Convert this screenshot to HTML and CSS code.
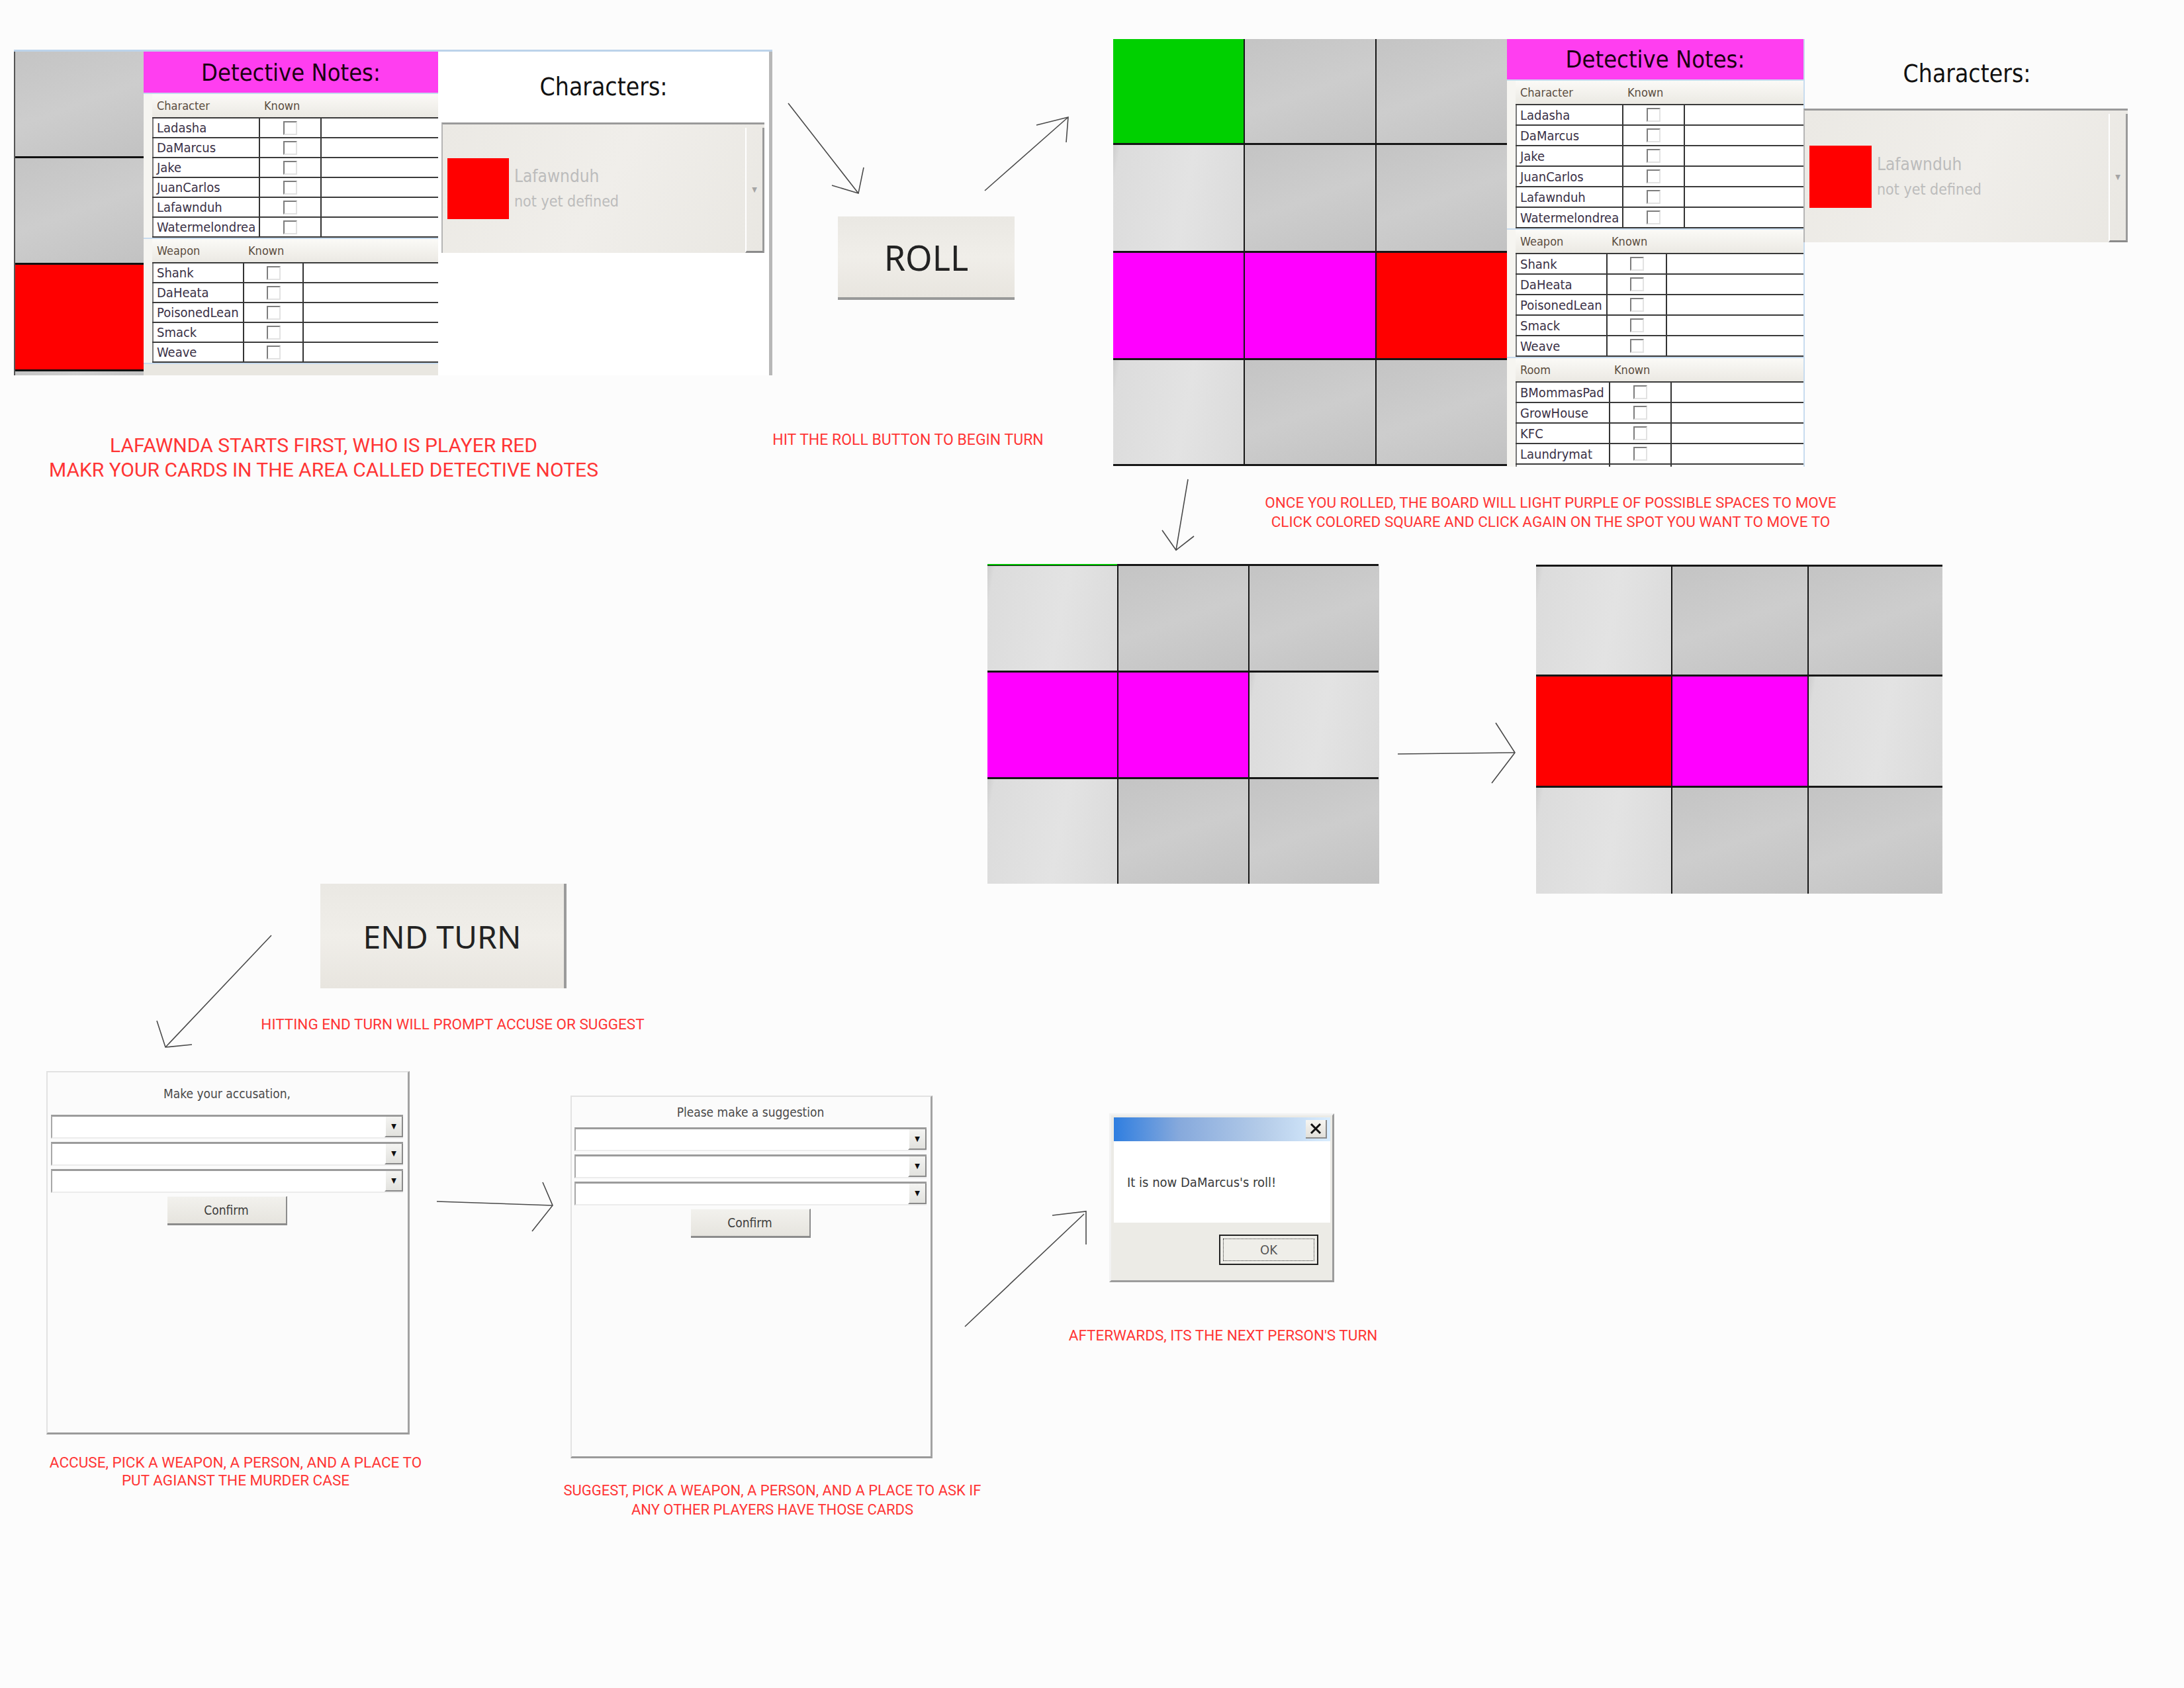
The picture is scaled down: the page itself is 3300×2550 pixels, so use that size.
FILE: index.html
```html
<!DOCTYPE html>
<html lang="en">
<head>
  <meta charset="UTF-8">
  <title>How to play - Clue walkthrough</title>
  <link rel="stylesheet" href="styles.css">
</head>
<body>
<div class="canvas">

  <!-- step 1: first screen, red player starts -->
  <div class="screen first">
    <div class="strip">
      <div class="cell c-gray"></div>
      <div class="cell c-gray"></div>
      <div class="cell c-red"></div>
      <div class="cell c-gray"></div>
    </div>
    <div class="notes">
      <div class="notes-head">Detective Notes:</div>
      <div class="sect person">
        <div class="sect-head"><span>Character</span><span>Known</span></div>
        <div class="rows">
          <div class="row"><span class="name">Ladasha</span><span class="chk"><i class="box"></i></span><span></span></div>
          <div class="row"><span class="name">DaMarcus</span><span class="chk"><i class="box"></i></span><span></span></div>
          <div class="row"><span class="name">Jake</span><span class="chk"><i class="box"></i></span><span></span></div>
          <div class="row"><span class="name">JuanCarlos</span><span class="chk"><i class="box"></i></span><span></span></div>
          <div class="row"><span class="name">Lafawnduh</span><span class="chk"><i class="box"></i></span><span></span></div>
          <div class="row"><span class="name">Watermelondrea</span><span class="chk"><i class="box"></i></span><span></span></div>
        </div>
      </div>
      <div class="sect weapon">
        <div class="sect-head"><span>Weapon</span><span>Known</span></div>
        <div class="rows">
          <div class="row"><span class="name">Shank</span><span class="chk"><i class="box"></i></span><span></span></div>
          <div class="row"><span class="name">DaHeata</span><span class="chk"><i class="box"></i></span><span></span></div>
          <div class="row"><span class="name">PoisonedLean</span><span class="chk"><i class="box"></i></span><span></span></div>
          <div class="row"><span class="name">Smack</span><span class="chk"><i class="box"></i></span><span></span></div>
          <div class="row"><span class="name">Weave</span><span class="chk"><i class="box"></i></span><span></span></div>
        </div>
      </div>
      <div class="sect filler"></div>
    </div>
    <div class="chars bordered">
      <div class="chars-title">Characters:</div>
      <div class="combo">
        <div class="swatch"></div>
        <div class="combo-text">
          <div>Lafawnduh</div>
          <div class="sub">not yet defined</div>
        </div>
        <div class="combo-drop">&#9660;</div>
      </div>
    </div>
  </div>

  <div class="caption cap-start">LAFAWNDA STARTS FIRST, WHO IS PLAYER RED<br>MAKR YOUR CARDS IN THE AREA CALLED DETECTIVE NOTES</div>

  <!-- step 2: roll -->
  <div class="bigbtn roll">ROLL</div>
  <div class="caption cap-roll">HIT THE ROLL BUTTON TO BEGIN TURN</div>

  <!-- step 3: board lit up after the roll -->
  <div class="screen second">
    <div class="board board-main">
      <div class="cell c-green"></div><div class="cell c-gray"></div><div class="cell c-gray"></div>
      <div class="cell c-light"></div><div class="cell c-gray"></div><div class="cell c-gray"></div>
      <div class="cell c-mag"></div><div class="cell c-mag"></div><div class="cell c-red"></div>
      <div class="cell c-light"></div><div class="cell c-gray"></div><div class="cell c-gray"></div>
    </div>
    <div class="notes tall">
      <div class="notes-head">Detective Notes:</div>
      <div class="sect person">
        <div class="sect-head"><span>Character</span><span>Known</span></div>
        <div class="rows">
          <div class="row"><span class="name">Ladasha</span><span class="chk"><i class="box"></i></span><span></span></div>
          <div class="row"><span class="name">DaMarcus</span><span class="chk"><i class="box"></i></span><span></span></div>
          <div class="row"><span class="name">Jake</span><span class="chk"><i class="box"></i></span><span></span></div>
          <div class="row"><span class="name">JuanCarlos</span><span class="chk"><i class="box"></i></span><span></span></div>
          <div class="row"><span class="name">Lafawnduh</span><span class="chk"><i class="box"></i></span><span></span></div>
          <div class="row"><span class="name">Watermelondrea</span><span class="chk"><i class="box"></i></span><span></span></div>
        </div>
      </div>
      <div class="sect weapon">
        <div class="sect-head"><span>Weapon</span><span>Known</span></div>
        <div class="rows">
          <div class="row"><span class="name">Shank</span><span class="chk"><i class="box"></i></span><span></span></div>
          <div class="row"><span class="name">DaHeata</span><span class="chk"><i class="box"></i></span><span></span></div>
          <div class="row"><span class="name">PoisonedLean</span><span class="chk"><i class="box"></i></span><span></span></div>
          <div class="row"><span class="name">Smack</span><span class="chk"><i class="box"></i></span><span></span></div>
          <div class="row"><span class="name">Weave</span><span class="chk"><i class="box"></i></span><span></span></div>
        </div>
      </div>
      <div class="sect room">
        <div class="sect-head"><span>Room</span><span>Known</span></div>
        <div class="rows">
          <div class="row"><span class="name">BMommasPad</span><span class="chk"><i class="box"></i></span><span></span></div>
          <div class="row"><span class="name">GrowHouse</span><span class="chk"><i class="box"></i></span><span></span></div>
          <div class="row"><span class="name">KFC</span><span class="chk"><i class="box"></i></span><span></span></div>
          <div class="row"><span class="name">Laundrymat</span><span class="chk"><i class="box"></i></span><span></span></div>
          <div class="row"><span class="name"></span><span class="chk"><i class="box"></i></span><span></span></div>
        </div>
      </div>
    </div>
    <div class="chars">
      <div class="chars-title">Characters:</div>
      <div class="combo">
        <div class="swatch"></div>
        <div class="combo-text">
          <div>Lafawnduh</div>
          <div class="sub">not yet defined</div>
        </div>
        <div class="combo-drop">&#9660;</div>
      </div>
    </div>
  </div>

  <div class="caption cap-once">ONCE YOU ROLLED, THE BOARD WILL LIGHT PURPLE OF POSSIBLE SPACES TO MOVE<br>CLICK COLORED SQUARE AND CLICK AGAIN ON THE SPOT YOU WANT TO MOVE TO</div>

  <!-- step 4: pick a square, then move -->
  <div class="board board-pick">
    <div class="cell c-light"></div><div class="cell c-gray"></div><div class="cell c-gray"></div>
    <div class="cell c-mag"></div><div class="cell c-mag"></div><div class="cell c-light"></div>
    <div class="cell c-light"></div><div class="cell c-gray"></div><div class="cell c-gray"></div>
  </div>

  <div class="board board-moved">
    <div class="cell c-light"></div><div class="cell c-gray"></div><div class="cell c-gray"></div>
    <div class="cell c-red"></div><div class="cell c-mag"></div><div class="cell c-light"></div>
    <div class="cell c-light"></div><div class="cell c-gray"></div><div class="cell c-gray"></div>
  </div>

  <!-- step 5: end turn -->
  <div class="bigbtn endturn">END TURN</div>
  <div class="caption cap-end">HITTING END TURN WILL PROMPT ACCUSE OR SUGGEST</div>

  <div class="dialog accuse">
    <div class="dialog-title">Make your accusation,</div>
    <div class="select"><span class="select-btn">&#9660;</span></div>
    <div class="select"><span class="select-btn">&#9660;</span></div>
    <div class="select"><span class="select-btn">&#9660;</span></div>
    <div class="confirm">Confirm</div>
  </div>
  <div class="caption cap-accuse">ACCUSE, PICK A WEAPON, A PERSON, AND A PLACE TO<br>PUT AGIANST THE MURDER CASE</div>

  <div class="dialog suggest">
    <div class="dialog-title">Please make a suggestion</div>
    <div class="select"><span class="select-btn">&#9660;</span></div>
    <div class="select"><span class="select-btn">&#9660;</span></div>
    <div class="select"><span class="select-btn">&#9660;</span></div>
    <div class="confirm">Confirm</div>
  </div>
  <div class="caption cap-suggest">SUGGEST, PICK A WEAPON, A PERSON, AND A PLACE TO ASK IF<br>ANY OTHER PLAYERS HAVE THOSE CARDS</div>

  <!-- step 6: next player -->
  <div class="msgbox">
    <div class="msg-title">
      <span class="msg-close">
        <svg width="18" height="16" viewBox="0 0 18 16"><path d="M2 1 L16 15 M16 1 L2 15" stroke="#111" stroke-width="3"/></svg>
      </span>
    </div>
    <div class="msg-body">It is now DaMarcus's roll!</div>
    <div class="msg-foot"><span class="ok">OK</span></div>
  </div>
  <div class="caption cap-after">AFTERWARDS, ITS THE NEXT PERSON'S TURN</div>

  <!-- hand drawn arrows -->
  <svg class="arrows" width="3300" height="2550" viewBox="0 0 3300 2550">
    <g stroke="#4a4a4a" stroke-width="1.6" fill="none">
      <path d="M1191 156 L1297 292 M1257 280 L1297 292 L1305 253"/>
      <path d="M1488 288 L1614 177 M1566 189 L1614 177 L1611 215"/>
      <path d="M1795 724 L1777 831 M1756 801 L1777 831 L1804 810"/>
      <path d="M2112 1139 L2289 1137 M2260 1092 L2289 1137 L2254 1183"/>
      <path d="M410 1413 L250 1582 M237 1542 L250 1582 L290 1578"/>
      <path d="M660 1815 L835 1821 M820 1786 L835 1821 L804 1860"/>
      <path d="M1458 2004 L1638 1834 M1590 1836 L1641 1830 L1641 1880"/>
    </g>
  </svg>
</div>
</body>
</html>
```

FILE: styles.css
```css
body {
  margin: 0;
  background: #fcfcfc;
  font-family: "DejaVu Sans Condensed", "DejaVu Sans", sans-serif;
  color: #333;
}
.canvas { position: relative; width: 3300px; height: 2550px; overflow: hidden; }

/* pieces placed on the walkthrough canvas */
.screen, .board-pick, .board-moved, .bigbtn, .dialog, .msgbox, .caption, .arrows { position: absolute; }
.arrows { left: 0; top: 0; pointer-events: none; }

/* board cells */
.cell { flex: none; }
.c-light { background: linear-gradient(100deg, #cdcdcd 0, #dcdcdc 5%, #e3e3e3 55%, #dadada 100%); }
.c-gray { background: linear-gradient(160deg, #c4c4c4, #cdcdcd 50%, #c2c2c2); }
.c-green { background: #00d000; }
.c-mag { background: #ff00ff; }
.c-red { background: #ff0000; }

.board { display: grid; background: #161616; column-gap: 2px; row-gap: 3px; border-bottom: 3px solid #161616; }

/* screen 1 */
.screen { display: flex; background: #fff; overflow: hidden; }
.screen.first { left: 21px; top: 75px; width: 1146px; height: 489px; border-top: 3px solid #bcd3ea; }
.strip { width: 194px; border-left: 2px solid #555; display: flex; flex-direction: column; gap: 3px; background: #111; }
.strip .cell { height: 158px; }
.strip .cell:last-child { flex: 1; }

/* detective notes */
.notes { width: 445px; flex: none; background: #ebe9e3; display: flex; flex-direction: column; overflow: hidden; }
.notes-head { height: 62px; flex: none; background: #ff3ef0; color: #1c0012; font-size: 36px; display: flex; align-items: center; justify-content: center; }
.sect { --c1: 161px; --c2: 95px; flex: none; padding-left: 13px; border-top: 2px solid #c6daee; background: #f6f5f1; }
.sect:first-of-type { border-top: none; }
.sect.weapon { --c1: 137px; --c2: 92px; }
.sect.room { --c1: 141px; --c2: 95px; }
.sect.filler { flex: 1; background: #e9e7e1; }
.sect-head { height: 35px; display: grid; grid-template-columns: var(--c1) var(--c2) 1fr; align-items: center; font-size: 18px; color: #5b4d40; background: linear-gradient(#fbfaf7, #ebe9e3); }
.sect-head span:first-child { padding-left: 7px; }
.sect-head span:nth-child(2) { padding-left: 8px; }
.rows { border-bottom: 2px solid #3a3a3a; }
.row { height: 30px; box-sizing: border-box; display: grid; grid-template-columns: var(--c1) var(--c2) 1fr; background: #fff; border-top: 2px solid #3a3a3a; font-size: 20px; }
.notes.tall .notes-head { height: 61px; }
.notes.tall .row { height: 31px; }
.name { padding-left: 5px; border-left: 2px solid #7a7a7a; display: flex; align-items: center; white-space: nowrap; overflow: hidden; color: #3a3146; }
.chk { border-left: 2px solid #333; border-right: 2px solid #333; display: flex; align-items: center; justify-content: center; }
.box { width: 17px; height: 17px; border: 2px solid; border-color: #7d7d7d #e2e2e2 #e2e2e2 #7d7d7d; background: #fff; }

/* characters combo */
.chars { flex: 1; display: flex; flex-direction: column; background: #fff; }
.chars.bordered { border-right: 5px solid #b8b8b8; }
.chars-title { height: 107px; flex: none; display: flex; align-items: center; justify-content: center; font-size: 37px; color: #111; }
.combo { height: 197px; box-sizing: border-box; margin: 0 7px 0 5px; border-top: 3px solid #9a9a9a; border-left: 2px solid #b5b5b5; background: linear-gradient(120deg, #ebe9e4, #f0eeea 50%, #e9e7e2); display: flex; align-items: center; }
.swatch { width: 93px; height: 92px; background: #ff0000; margin-left: 7px; flex: none; }
.combo-text { margin-left: 8px; color: #bcbcbc; font-size: 26px; line-height: 38px; }
.combo-text .sub { font-size: 23px; }
.combo-drop { margin-left: auto; align-self: stretch; margin-top: 5px; width: 24px; border-left: 2px solid #fff; border-right: 3px solid #9a9a9a; border-bottom: 3px solid #8a8a8a; display: flex; align-items: center; justify-content: center; color: #a5a5a5; font-size: 11px; }

/* screen 2 */
.screen.second { left: 1682px; top: 59px; width: 1535px; height: 646px; background: transparent; }
.board-main { width: 595px; flex: none; grid-template-columns: repeat(3, 197px); grid-template-rows: 157px 160px 159px 157px; align-self: flex-start; }
.screen.second .notes { width: 448px; border-right: 2px solid #c8dcef; }
.screen.second .chars { background: transparent; }
.screen.second .chars-title { height: 105px; }
.screen.second .combo { margin: 0 2px 0 -2px; height: 202px; }
.screen.second .swatch { height: 94px; width: 94px; }

/* middle boards */
.board-pick { left: 1492px; top: 852px; width: 591px; grid-template-columns: repeat(3, 196px); grid-template-rows: repeat(3, 158px); border-top: 3px solid #161616; border-bottom: none; }
.board-pick::before { content: ""; position: absolute; left: 0; top: -3px; width: 196px; height: 2px; background: #00c000; }
.board-moved { left: 2321px; top: 853px; width: 614px; grid-template-columns: 204px 204px 202px; grid-template-rows: 163px 165px 160px; border-top: 3px solid #161616; border-bottom: none; }

/* big buttons */
.bigbtn { display: flex; align-items: center; justify-content: center; box-sizing: border-box; font-family: "Noto Sans", sans-serif; color: #222; background: linear-gradient(#eae8e3, #f0eee9 50%, #e8e5df); }
.roll { left: 1266px; top: 327px; width: 267px; height: 126px; font-size: 52px; border-bottom: 4px solid #999; }
.endturn { left: 484px; top: 1335px; width: 372px; height: 158px; font-size: 48px; border-right: 4px solid #9b9b9b; }

/* accuse / suggest dialogs */
.dialog { display: flex; flex-direction: column; box-sizing: border-box; background: #fbfbfb; border: 2px solid #e2e2e2; border-right: 3px solid #a3a3a3; border-bottom: 3px solid #9a9a9a; }
.accuse { left: 70px; top: 1618px; width: 549px; height: 549px; padding: 0 7px 0 5px; }
.suggest { left: 862px; top: 1655px; width: 547px; height: 548px; padding: 0 6px 0 4px; }
.dialog-title { height: 64px; flex: none; display: flex; align-items: center; justify-content: center; font-size: 19px; color: #4a4a4a; }
.suggest .dialog-title { height: 46px; }
.select { height: 36px; flex: none; box-sizing: border-box; margin-bottom: 5px; background: #fff; border-top: 3px solid #9b9b9b; border-left: 2px solid #a8a8a8; border-bottom: 2px solid #ececec; display: flex; justify-content: flex-end; }
.select-btn { width: 24px; background: linear-gradient(#f4f4f2, #e2e2de); border-left: 2px solid #fff; border-right: 2px solid #8a8a8a; border-bottom: 2px solid #8a8a8a; display: flex; align-items: center; justify-content: center; font-size: 11px; color: #111; }
.confirm { align-self: center; width: 181px; height: 44px; box-sizing: border-box; display: flex; align-items: center; justify-content: center; background: linear-gradient(#f2f1ed, #e6e4de); border-top: 1px solid #f8f8f8; border-right: 2px solid #8c8c8c; border-bottom: 3px solid #8c8c8c; font-size: 19px; color: #3c3c3c; }

/* message box */
.msgbox { left: 1676px; top: 1682px; width: 340px; height: 255px; box-sizing: border-box; padding: 3px 3px 0 4px; background: #ecebe6; border: 3px solid; border-color: #f2f2f2 #9c9c9c #9c9c9c #f2f2f2; }
.msg-title { height: 36px; display: flex; align-items: center; justify-content: flex-end; padding-right: 5px; background: linear-gradient(90deg, #2f7ee0, #86a9dc 30%, #b6cde9 70%, #d9edff); }
.msg-close { width: 30px; height: 26px; display: flex; align-items: center; justify-content: center; background: linear-gradient(#f6f5f1, #e2e0da); border-right: 2px solid #8a8a8a; border-bottom: 2px solid #8a8a8a; }
.msg-body { height: 123px; background: #fff; display: flex; align-items: center; padding-left: 20px; font-size: 20px; color: #3a3a3a; }
.msg-foot { display: flex; justify-content: flex-end; padding: 18px 18px 0 0; }
.ok { width: 150px; height: 46px; box-sizing: border-box; border: 2px solid #222; background: #efeee9; outline: 1px dotted #333; outline-offset: -7px; display: flex; align-items: center; justify-content: center; font-size: 20px; color: #555; }

/* red notes */
.caption { font-family: Roboto, "Noto Sans", sans-serif; color: #ff3535; text-align: center; white-space: nowrap; }
.cap-start { left: 0; top: 654px; width: 978px; font-size: 30px; line-height: 37px; }
.cap-roll { left: 1072px; top: 651px; width: 600px; font-size: 23px; line-height: 28px; }
.cap-once { left: 1843px; top: 745px; width: 1000px; font-size: 22.5px; line-height: 29px; }
.cap-end { left: 284px; top: 1533px; width: 800px; font-size: 22.5px; line-height: 28px; }
.cap-accuse { left: 6px; top: 2196px; width: 700px; font-size: 22.5px; line-height: 27px; }
.cap-suggest { left: 767px; top: 2237px; width: 800px; font-size: 22px; line-height: 29px; }
.cap-after { left: 1548px; top: 2003px; width: 600px; font-size: 22.5px; line-height: 28px; }
```
